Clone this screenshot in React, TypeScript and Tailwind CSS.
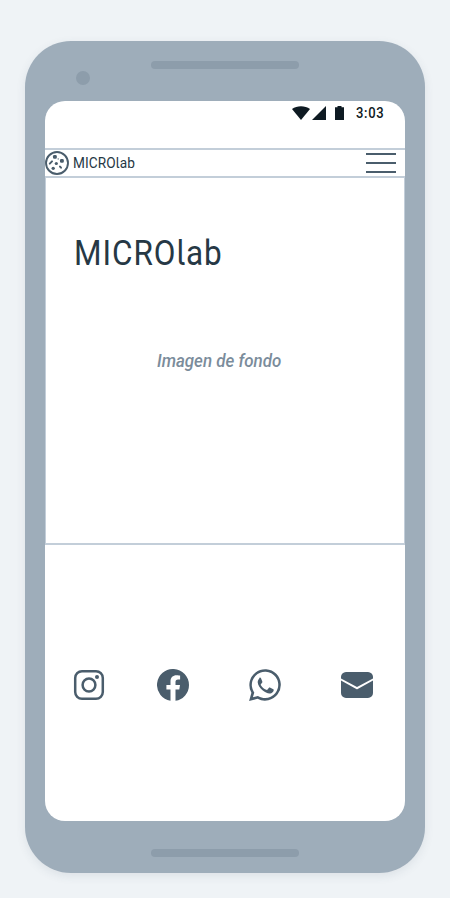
import React from "react";

function StatusBar() {
  return (
    <div className="flex h-[47px] shrink-0 items-start pl-[247px] pt-[5px] text-[#0e1a22]">
      <svg className="block h-[14px] w-[18px]" viewBox="0 0 18 14" fill="currentColor">
        <path d="M0 3C5-.8 13-.8 18 3L9 14z" />
      </svg>
      <svg className="ml-[2px] block h-[14px] w-[14px]" viewBox="0 0 14 14" fill="currentColor">
        <path d="M0 14L14 0V14z" />
      </svg>
      <svg className="ml-[9px] block h-[14px] w-[9px]" viewBox="0 0 9 14" fill="currentColor">
        <path d="M0 1.2H2.5V0H6.5V1.2H9V14H0z" />
      </svg>
      <span className="ml-[12px] origin-left scale-x-[0.93] text-[14px] font-medium leading-[15px] tracking-[0.7px]">3:03</span>
    </div>
  );
}

function PetriLogo() {
  return (
    <svg className="block h-6 w-6 shrink-0" viewBox="0 0 24 24" fill="#4a5d6c">
      <circle cx="12" cy="12" r="11" fill="none" stroke="#4a5d6c" strokeWidth="1.9" />
      <rect x="8" y="3.9" width="3.8" height="3.8" rx="1.3" />
      <rect x="15" y="8" width="3.8" height="3.8" rx="1.3" />
      <circle cx="11.3" cy="12.5" r="1.6" />
      <circle cx="8.2" cy="17.3" r="1.65" />
      <path d="M4.8 12.6L7 10.4M15 15.6L16 16.7" stroke="#4a5d6c" strokeWidth="2" strokeLinecap="round" />
      <circle cx="13.2" cy="7.9" r="0.65" />
    </svg>
  );
}

function Wordmark() {
  return (
    <>
      MICRO<span className="font-['Inter'] [font-feature-settings:'cv05']">l</span>ab
    </>
  );
}

function Header() {
  return (
    <header className="flex h-[30px] items-center border-y-2 border-[#c3ced9]">
      <PetriLogo />
      <span className="ml-[4px] origin-left scale-x-[0.91] whitespace-nowrap text-[15px] leading-5 tracking-[0.1px] text-[#263845]">
        <Wordmark />
      </span>
      <div className="ml-auto mr-[9px] flex w-[30px] flex-col gap-[7px]">
        <i className="h-[2px] bg-[#4a5d6c]" />
        <i className="h-[2px] bg-[#4a5d6c]" />
        <i className="h-[2px] bg-[#4a5d6c]" />
      </div>
    </header>
  );
}

function Socials() {
  return (
    <div className="mt-[124px] flex pl-[28px] text-[#4a5d6c]">
      <svg className="block size-8" viewBox="0 0 32 32" fill="none" stroke="currentColor">
        <rect x="2.2" y="2.2" width="27.6" height="27.6" rx="6.8" strokeWidth="2.5" />
        <circle cx="16" cy="16" r="6.4" strokeWidth="2.5" />
        <circle cx="24" cy="8" r="2" fill="currentColor" stroke="none" />
      </svg>
      <svg className="ml-[52px] block size-8" viewBox="0 0 32 32" fill="currentColor">
        <path d="M32 16A16 16 0 1 0 13.5 31.8V20.6H9.4V16h4.1v-3.5c0-4 2.4-6.2 6-6.2 1.8 0 3.6.3 3.6.3v4h-2c-2 0-2.6 1.2-2.6 2.5V16H23l-.7 4.6h-3.8v11.2A16 16 0 0 0 32 16z" />
      </svg>
      <svg className="ml-[60px] block size-8" viewBox="0 0 32 32" fill="currentColor">
        <path fillRule="evenodd" d="M27.3 4.7A15.85 15.85 0 0 0 2.4 23.8L.1 32l8.4-2.2A15.87 15.87 0 0 0 27.3 4.7zM16.1 29.1c-2.4 0-4.7-.6-6.7-1.8l-.5-.3-5 1.3 1.4-4.8-.4-.5a13.2 13.2 0 1 1 11.2 6.1z" />
        <path d="M10.9 8.4c.5 0 .8.1 1.1.8l1.3 3.2c.2.5.1.8-.1 1.1l-1.3 1.7c-.3.4-.3.7 0 1.1 1.4 2.2 2.9 3.5 5.3 4.5.5.2.8.2 1.1-.1l1.5-1.8c.3-.4.7-.5 1.1-.3l3.4 1.6c.5.3.5.7.3 1.5-.4 1.5-1.9 2.6-3.3 2.7-2.4.3-5.4-1-7.8-3.1-2.5-2.2-4.8-5.4-4.8-8.1 0-1.7.9-3.1 1.8-4.3.1-.4.2-.5.4-.5z" />
      </svg>
      <svg className="ml-[60px] block size-8" viewBox="0 0 32 32" fill="currentColor">
        <path d="M0 8.2A5 5 0 0 1 5 3h22a5 5 0 0 1 5 5.2v1.2L16 18 0 9.4z" />
        <path d="M0 11.5l15.3 8.6q.7.4 1.4 0L32 11.5V24a5 5 0 0 1-5 5H5a5 5 0 0 1-5-5z" />
      </svg>
    </div>
  );
}

export default function App() {
  return (
    <div className="h-[898px] w-[450px] bg-[#eff3f6] px-[25px] pt-[41px] font-['Roboto',sans-serif]">
      <div className="relative h-[832px] w-[400px] rounded-[46px] bg-[#9eadba] px-5 pt-[60px] shadow-[0_3px_10px_rgba(60,80,100,0.1)]">
        <div className="absolute left-[126px] top-5 h-2 w-[148px] rounded-full bg-[#8d9dab]" />
        <div className="absolute left-[51px] top-[30px] size-[14px] rounded-full bg-[#8d9dab]" />
        <div className="absolute left-[126px] top-[808px] h-2 w-[148px] rounded-full bg-[#8d9dab]" />
        <main className="flex h-[720px] flex-col overflow-hidden rounded-[20px] bg-white">
          <StatusBar />
          <Header />
          <section className="h-[367px] border-x border-b-2 border-[#c3ced9] pt-[51px]">
            <h1 className="ml-[28px] h-[46px] origin-left scale-x-[0.9] whitespace-nowrap text-[35px] leading-[46px] tracking-[1.05px] text-[#263845]">
              <Wordmark />
            </h1>
            <p className="ml-[111px] mt-[74px] origin-left scale-x-[0.94] whitespace-nowrap text-[18px] font-medium italic leading-6 text-[#7b8c9b]">Imagen de fondo</p>
          </section>
          <Socials />
        </main>
      </div>
    </div>
  );
}
